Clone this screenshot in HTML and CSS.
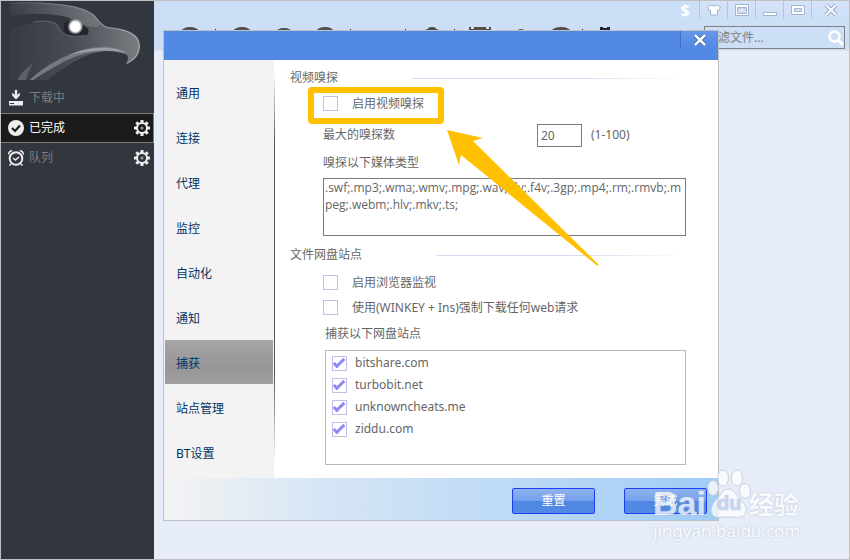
FILE: index.html
```html
<!DOCTYPE html>
<html lang="zh-CN">
    <head>
        <meta charset="UTF-8">
        <meta name="viewport" content="width=device-width, initial-scale=1.0">
        <title>下载管理</title>
        <link rel="stylesheet" href="styles.css">
    </head>
    <body>
        <div class="app">
            <aside class="sidebar">
                <svg class="eagle" viewBox="3 3 459 237" aria-hidden="true">
                    <defs>
                        <linearGradient id="headFill" x1="0" y1="0" x2="1" y2="0">
                            <stop offset="0" stop-color="#353a43"/>
                            <stop offset="0.5" stop-color="#4a4d55"/>
                            <stop offset="1" stop-color="#7b7d82"/>
                        </linearGradient>
                        <linearGradient id="browFill" x1="0" y1="0" x2="1" y2="0">
                            <stop offset="0" stop-color="#3a3f48"/>
                            <stop offset="1" stop-color="#74767b"/>
                        </linearGradient>
                        <linearGradient id="edge" x1="0" y1="0" x2="1" y2="0">
                            <stop offset="0" stop-color="#4a4e56"/>
                            <stop offset="0.5" stop-color="#85878b"/>
                            <stop offset="1" stop-color="#a5a6a9"/>
                        </linearGradient>
                        <radialGradient id="eyeGlow">
                            <stop offset="0.6" stop-color="#fff"/>
                            <stop offset="1" stop-color="#fff" stop-opacity="0"/>
                        </radialGradient>
                    </defs>
                    <path fill="url(#headFill)" d="M30 10 C110 6 240 10 280 45 C296 60 300 78 325 83 C375 88 420 100 418 140 C415 172 395 183 380 190 C386 176 386 166 374 159 C340 146 280 148 215 190 C190 206 165 222 142 240 H30 Z"/>
                    <path fill="#31363f" d="M30 46 C110 36 180 38 210 54 L206 70 L200 108 C190 104 186 94 178 80 C170 66 160 64 130 64 C90 68 60 76 30 90 Z"/>
                    <path fill="url(#browFill)" d="M30 10 C110 6 240 10 280 45 C292 56 297 66 299 75 C290 84 265 82 245 70 C200 40 110 36 30 47 Z"/>
                    <path fill="#22252c" d="M192 70 C200 64 206 62 215 66 L246 74 C268 84 272 98 258 106 C230 112 204 110 194 100 Z"/>
                    <path fill="none" stroke="#777a80" stroke-width="2" d="M100 66 C150 60 164 64 176 84 C190 110 220 112 256 106"/>
                    <path fill="#777980" d="M90 240 C130 200 230 136 325 140 C360 142 385 156 386 166 C340 146 270 146 190 186 C150 208 120 226 100 240 Z"/>
                    <path fill="#9d9fa2" d="M205 166 C260 140 340 134 378 158 C330 148 270 148 205 166 Z"/>
                    <path fill="#5c5f67" d="M52 240 C60 220 80 206 98 190 C88 212 82 226 78 240 Z"/>
                    <path fill="none" stroke="url(#edge)" stroke-width="4" d="M30 10 C110 6 240 10 280 45 C296 60 300 78 325 83 C375 88 420 100 418 140 C415 172 395 183 380 190"/>
                    <ellipse cx="226" cy="80" rx="24" ry="24" fill="url(#eyeGlow)"/>
                </svg>
                <nav class="menu">
                    <a class="menu-item" href="#">
                        <svg class="menu-icon" viewBox="0 0 16 16" aria-hidden="true">
                            <path fill="#eee" d="M6.800 0h2.400v5l2.600-2.400v3L8 9.400 4.200 5.600v-3L6.800 5zM1 11h14v4.500H1z"/>
                            <path fill="#31363f" d="M2 13h4v1H2z"/>
                        </svg>
                        <span class="menu-text">下载中</span>
                    </a>
                    <a class="menu-item active" href="#">
                        <svg class="menu-icon" viewBox="0 0 16 16" aria-hidden="true">
                            <circle cx="8" cy="8" r="8" fill="#eee"/>
                            <path fill="none" stroke="#1b1b1b" stroke-width="2.200" d="M4 8l3 3 5-5.500"/>
                        </svg>
                        <span class="menu-text">已完成</span>
                        <svg class="menu-icon" viewBox="0 0 16 16" aria-hidden="true"><use href="#gear"/></svg>
                    </a>
                    <a class="menu-item" href="#">
                        <svg class="menu-icon" viewBox="0 0 16 16" aria-hidden="true">
                            <circle cx="8" cy="8.500" r="6.300" fill="none" stroke="#eee" stroke-width="2"/>
                            <path fill="none" stroke="#eee" stroke-width="1.500" d="M5 8l2.500 2L11 7M.6 4.500C.8 2 2 1 4.200.8M15.400 4.500C15.200 2 14 1 11.800.8M3 14l-1.500 1.500M13 14l1.500 1.500"/>
                        </svg>
                        <span class="menu-text">队列</span>
                        <svg class="menu-icon" viewBox="0 0 16 16" aria-hidden="true">
                            <g id="gear">
                                <circle cx="8" cy="8" r="5" fill="none" stroke="#eee" stroke-width="2"/>
                                <path stroke="#eee" stroke-width="3" d="M8 0v3M8 13v3M0 8h3M13 8h3M2.300 2.300l2 2M11.700 11.700l2 2M2.300 13.700l2-2M11.700 4.300l2-2"/>
                                <circle cx="8" cy="8" r="1.500" fill="#999"/>
                            </g>
                        </svg>
                    </a>
                </nav>
            </aside>

            <main class="main">
                <header class="header">
                    <svg class="tools" viewBox="0 0 550 30" aria-hidden="true">
                        <g fill="#505050">
                            <ellipse cx="36" cy="31" rx="9" ry="5"/>
                            <ellipse cx="88" cy="31" rx="9" ry="5"/>
                            <ellipse cx="130" cy="31" rx="8" ry="4"/>
                            <ellipse cx="171" cy="31" rx="9" ry="5"/>
                            <path d="M269 30l4-2h1q0-2 3-2h2q3 0 3 2h1l4 2zM315 26h2v2h3v-2h12v2h3v-2h2v4h-22z"/>
                            <ellipse cx="367" cy="31" rx="4" ry="3"/>
                            <ellipse cx="407" cy="31" rx="10" ry="5"/>
                        </g>
                        <path fill="#223" d="M446 26h3v1h4v-1h3v3h-2v1h-6v-1h-2zM61 28h1v2h-1zM196 28h1v2h-1zM251 28h1v2h-1zM300 28h1v2h-1zM428 28h1v2h-1z"/>
                    </svg>
                    <div class="header-right">
                        <div class="window-buttons">
                            <button class="window-button donate" type="button" aria-label="捐赠">$</button>
                            <button class="window-button" type="button" aria-label="皮肤">
                                <svg width="14" height="12" viewBox="0 0 14 12"><path fill="#fff" stroke="#a3b4d0" d="M4 1q3 2 6 0l3.500 2-1.500 3.500-1.500-.5V11h-7V6L2 6.500.5 3z"/></svg>
                            </button>
                            <button class="window-button" type="button" aria-label="菜单">
                                <svg width="14" height="12" viewBox="0 0 14 12"><path fill="#fff" stroke="#a3b4d0" fill-rule="evenodd" d="M.5.5h13v11H.5zM2.500 3.500v6h9v-6z"/><path fill="#fff" stroke="#a3b4d0" stroke-width=".5" d="M4 5h6L7 8z"/></svg>
                            </button>
                            <button class="window-button" type="button" aria-label="最小化">
                                <svg width="14" height="12" viewBox="0 0 14 12"><path fill="#fff" stroke="#a3b4d0" d="M.5 8.500h13v3H.5z"/></svg>
                            </button>
                            <button class="window-button" type="button" aria-label="最大化">
                                <svg width="14" height="12" viewBox="0 0 14 12"><path fill="#fff" stroke="#a3b4d0" fill-rule="evenodd" d="M.5 1.500h13v9H.5zM3.500 4.500v3h7v-3z"/></svg>
                            </button>
                            <button class="window-button wide" type="button" aria-label="关闭">
                                <svg width="14" height="12" viewBox="0 0 14 12"><path stroke="#94a6c6" stroke-width="4" d="M2 1l10 10M12 1L2 11"/><path stroke="#fff" stroke-width="2" d="M2 1l10 10M12 1L2 11"/></svg>
                            </button>
                        </div>
                        <form class="search">
                            <input class="search-input" type="text" placeholder="过滤文件..." aria-label="过滤文件">
                            <svg class="search-icon" viewBox="0 0 16 16" aria-hidden="true">
                                <circle cx="6.500" cy="6.500" r="5" fill="none" stroke="#fff" stroke-width="2.500"/>
                                <path stroke="#fff" stroke-width="3" d="M10 10l5 5"/>
                            </svg>
                        </form>
                    </div>
                </header>
            </main>

            <section class="dialog" role="dialog" aria-label="设置">
                <div class="dialog-title">
                    <button class="dialog-close" type="button" aria-label="关闭">
                        <svg width="12" height="12" viewBox="0 0 12 12"><path stroke="#2d5aa8" stroke-width="4" d="M1 1l10 10M11 1L1 11"/><path stroke="#fff" stroke-width="2.500" d="M1 1l10 10M11 1L1 11"/></svg>
                    </button>
                </div>
                <div class="dialog-body">
                    <nav class="tabs">
                        <a class="tab" href="#">通用</a>
                        <a class="tab" href="#">连接</a>
                        <a class="tab" href="#">代理</a>
                        <a class="tab" href="#">监控</a>
                        <a class="tab" href="#">自动化</a>
                        <a class="tab" href="#">通知</a>
                        <a class="tab selected" href="#">捕获</a>
                        <a class="tab" href="#">站点管理</a>
                        <a class="tab" href="#">BT设置</a>
                    </nav>
                    <div class="panel">
                        <h2 class="group-title">视频嗅探</h2>
                        <div class="group">
                            <div class="row tall">
                                <input class="check" type="checkbox" id="sniff">
                                <label for="sniff">启用视频嗅探</label>
                            </div>
                            <div class="row number-row">
                                <label class="number-label" for="maxSniff">最大的嗅探数</label>
                                <input class="number" type="text" id="maxSniff" value="20">
                                <span>(1-100)</span>
                            </div>
                            <label class="caption" for="types">嗅探以下媒体类型</label>
                            <textarea class="types" id="types" spellcheck="false">.swf;.mp3;.wma;.wmv;.mpg;.wav;.flv;.f4v;.3gp;.mp4;.rm;.rmvb;.mpeg;.webm;.hlv;.mkv;.ts;</textarea>
                        </div>
                        <h2 class="group-title sites-title">文件网盘站点</h2>
                        <div class="group">
                            <div class="row">
                                <input class="check" type="checkbox" id="browser">
                                <label for="browser">启用浏览器监视</label>
                            </div>
                            <div class="row">
                                <input class="check" type="checkbox" id="force">
                                <label for="force">使用(WINKEY + Ins)强制下载任何web请求</label>
                            </div>
                            <div class="sites-block">
                                <p class="caption">捕获以下网盘站点</p>
                                <ul class="sites">
                                    <li class="site"><input class="check" type="checkbox" id="site1" checked><label for="site1">bitshare.com</label></li>
                                    <li class="site"><input class="check" type="checkbox" id="site2" checked><label for="site2">turbobit.net</label></li>
                                    <li class="site"><input class="check" type="checkbox" id="site3" checked><label for="site3">unknowncheats.me</label></li>
                                    <li class="site"><input class="check" type="checkbox" id="site4" checked><label for="site4">ziddu.com</label></li>
                                </ul>
                            </div>
                        </div>
                    </div>
                </div>
                <div class="dialog-footer">
                    <button class="button" type="button">重置</button>
                    <button class="button" type="button">完成</button>
                </div>
            </section>

            <div class="highlight"></div>
            <svg class="arrow" viewBox="0 0 152 136" aria-hidden="true">
                <path fill="#ffc000" d="M0 0L36 8 26 11 152 135 150 135.500 14 25 12 35z"/>
            </svg>

            <div class="watermark">
                <div class="brand">
                    <span class="brand-bai">Bai</span>
                    <span class="paw">
                        <svg width="46" height="50" viewBox="0 0 46 50" aria-hidden="true">
                            <g fill="#fff" stroke="#c3cad6">
                                <ellipse cx="7" cy="19" rx="5.500" ry="7.500"/>
                                <ellipse cx="17" cy="9" rx="5.500" ry="8"/>
                                <ellipse cx="31" cy="9" rx="5.500" ry="8"/>
                                <ellipse cx="39" cy="22" rx="5.500" ry="7.500"/>
                                <path d="M22 20c6 0 8 6 12 10 5 5 8 9 5 15-3 5-9 3-17 3s-13 2-16-3c-3-7 1-11 5-15 4-4 5-10 11-10z"/>
                            </g>
                        </svg>
                        <span class="paw-text">du</span>
                    </span>
                    <span class="brand-cn">经验</span>
                </div>
                <div class="brand-url">jingyan.baidu.com</div>
            </div>
        </div>
    </body>
</html>
```
FILE: styles.css
```css
* {
    box-sizing: border-box;
}

body {
    margin: 0;
    font-family: "Noto Sans", "Noto Sans CJK SC", sans-serif;
    font-size: 12px;
    line-height: 18px;
    color: #666;
}

button, input, textarea {
    font: inherit;
    color: inherit;
    margin: 0;
}

a {
    color: inherit;
    text-decoration: none;
}

.app {
    position: relative;
    display: flex;
    min-height: 100vh;
    border: 1px solid #c0c0c0;
    overflow: hidden;
}

/* left menu */
.sidebar {
    width: 153px;
    flex: none;
    background-color: #31363f;
}

.eagle {
    display: block;
    width: 100%;
}

.menu {
    padding-top: 3px;
}

.menu-item {
    display: flex;
    align-items: center;
    gap: 5px;
    height: 30px;
    padding: 0 4px 0 7px;
    color: #7d7d7d;
}

.menu-item.active {
    background-color: #1b1b1b;
    color: #fff;
    border: solid #7b7b7b;
    border-width: 1px 1px 1px 0;
    padding-right: 3px;
}

.menu-icon {
    width: 16px;
    height: 16px;
    flex: none;
}

.menu-text {
    flex: 1;
}

/* main window */
.main {
    flex: 1;
    min-width: 0;
    background-color: #e6edf9;
}

.header {
    display: flex;
    justify-content: space-between;
    height: 50px;
    background-color: #cddef7;
    border-bottom: 1px solid #e2e4e2;
}

.tools {
    width: 550px;
    height: 30px;
    flex: none;
}

.header-right {
    display: flex;
    flex-direction: column;
    align-items: flex-end;
    gap: 7px;
    flex: none;
    margin-left: -50px;
}

.window-buttons {
    display: flex;
    height: 18px;
}

.window-button {
    display: flex;
    align-items: center;
    justify-content: center;
    width: 28px;
    padding: 0;
    border: 0;
    border-left: 1px solid #b3c4df;
    background: linear-gradient(#d6e4f9, #cddef7);
}

.window-button.donate {
    border: 0;
    background: none;
    font-size: 16px;
    font-weight: bold;
    color: #fff;
}

.window-button.wide {
    width: 38px;
}

.search {
    display: flex;
    align-items: center;
    width: 141px;
    height: 23px;
    margin-right: 4px;
    border: 1px solid #7f8083;
}

.search-input {
    flex: 1;
    min-width: 0;
    padding: 0 1px;
    border: 0;
    outline: none;
    background: none;
}

.search-input::placeholder {
    color: #7f7f7f;
}

.search-icon {
    width: 16px;
    height: 16px;
}

/* settings dialog */
.dialog {
    position: absolute;
    top: 29px;
    left: 162px;
    width: 556px;
    border: 1px solid #c0c0c0;
    background-color: #fff;
}

.dialog-title {
    display: flex;
    justify-content: flex-end;
    height: 29px;
    background-color: #5289e4;
}

.dialog-close {
    display: flex;
    align-items: center;
    justify-content: center;
    width: 38px;
    height: 18px;
    padding: 0;
    border: 0;
    border-left: 1px solid #3f6fc4;
    background: linear-gradient(#6496e8, #5289e4);
}

.dialog-body {
    display: flex;
}

.tabs {
    width: 110px;
    flex: none;
    padding-top: 9px;
    background-color: #f3f3f3;
}

.tab {
    display: flex;
    align-items: center;
    height: 45px;
    padding: 4px 12px 0;
    border-top: 1px solid #f1f6ed;
    color: #003366;
}

.tab.selected {
    margin: 0 1px;
    padding: 4px 11px 0;
    background: linear-gradient(#a5a5a5, #969696 60%, #a0a0a0);
}

.panel {
    flex: 1;
    min-width: 0;
    padding: 7px 32px 13px 15px;
    border-left: 1px solid;
    border-image: linear-gradient(#fff 3%, #555 20%, #555 75%, #fff 96%) 1;
}

.group-title {
    display: flex;
    align-items: center;
    gap: 74px;
    height: 22px;
    margin: 0;
    font-size: 12px;
    font-weight: normal;
}

.group-title::after {
    content: "";
    flex: 1;
    height: 1px;
    background: linear-gradient(to right, #d8dcf0 60%, #fff);
}

.sites-title {
    margin: 8px 0 4px;
}

.group {
    padding-left: 33px;
}

.row {
    display: flex;
    align-items: center;
    gap: 14px;
    height: 25px;
}

.row.tall {
    height: 29px;
}

.row.number-row {
    gap: 9px;
    height: 34px;
}

.number-label {
    width: 205px;
}

.number {
    width: 45px;
    height: 23px;
    padding: 0 3px;
    border: 1px solid #7b7b7b;
    outline: none;
}

.caption {
    display: block;
    margin: 2px 0 6px;
}

.types {
    display: block;
    width: 100%;
    height: 58px;
    padding: 0 1px;
    border: 1px solid #7b7b7b;
    outline: none;
    resize: none;
    overflow: hidden;
    font-family: "Open Sans", sans-serif;
    line-height: 17px;
    word-break: break-all;
}

.check {
    appearance: none;
    flex: none;
    width: 15px;
    height: 15px;
    border: 1px solid #c3bdec;
    background-color: #fff;
}

.check:checked::after {
    content: "";
    display: block;
    width: 9px;
    height: 3px;
    margin-top: 2px;
    border: solid #8f8af2;
    border-width: 0 0 3px 3px;
    transform: rotate(-45deg);
}

.sites-block {
    padding: 3px 0 0 2px;
}

.sites {
    height: 115px;
    margin: 7px 0 0;
    padding: 1px 6px;
    border: 1px solid #b8b8b8;
    list-style: none;
}

.site {
    display: flex;
    align-items: center;
    gap: 8px;
    height: 22px;
}

.dialog-footer {
    display: flex;
    align-items: center;
    justify-content: flex-end;
    gap: 29px;
    height: 42px;
    padding: 4px 11px 0;
    background: linear-gradient(to right, #f3f3f3, #d5e5f5 30%, #a0ccf6);
}

.button {
    width: 83px;
    height: 26px;
    padding: 0;
    border: 1px solid #1f3df5;
    border-radius: 2px;
    background: linear-gradient(#8fb3ef, #749fe9 50%, #4f86e3 50%, #5289e4);
    color: #fff;
}

/* marker over the first option */
.highlight {
    position: absolute;
    top: 86px;
    left: 307px;
    width: 136px;
    height: 37px;
    border: 6px solid #ffc000;
    border-radius: 4px;
}

.arrow {
    position: absolute;
    top: 129px;
    left: 446px;
    width: 152px;
    height: 136px;
}

.watermark {
    position: absolute;
    right: 44px;
    bottom: 16px;
    width: 152px;
    color: #fff;
    opacity: 0.75;
    text-shadow: 0 0 2px #a9b2c0;
    pointer-events: none;
}

.brand {
    display: flex;
    align-items: flex-end;
    height: 50px;
}

.brand-bai {
    font: bold 34px/32px "Liberation Sans", sans-serif;
}

.paw {
    position: relative;
    width: 43px;
    height: 50px;
}

.paw-text {
    position: absolute;
    top: 22px;
    left: 11px;
    font: bold 20px/24px "Liberation Sans", sans-serif;
    color: #b9cfee;
}

.brand-cn {
    font-size: 25px;
    font-weight: bold;
    line-height: 30px;
}

.brand-url {
    font-size: 17px;
    line-height: 24px;
}
```
